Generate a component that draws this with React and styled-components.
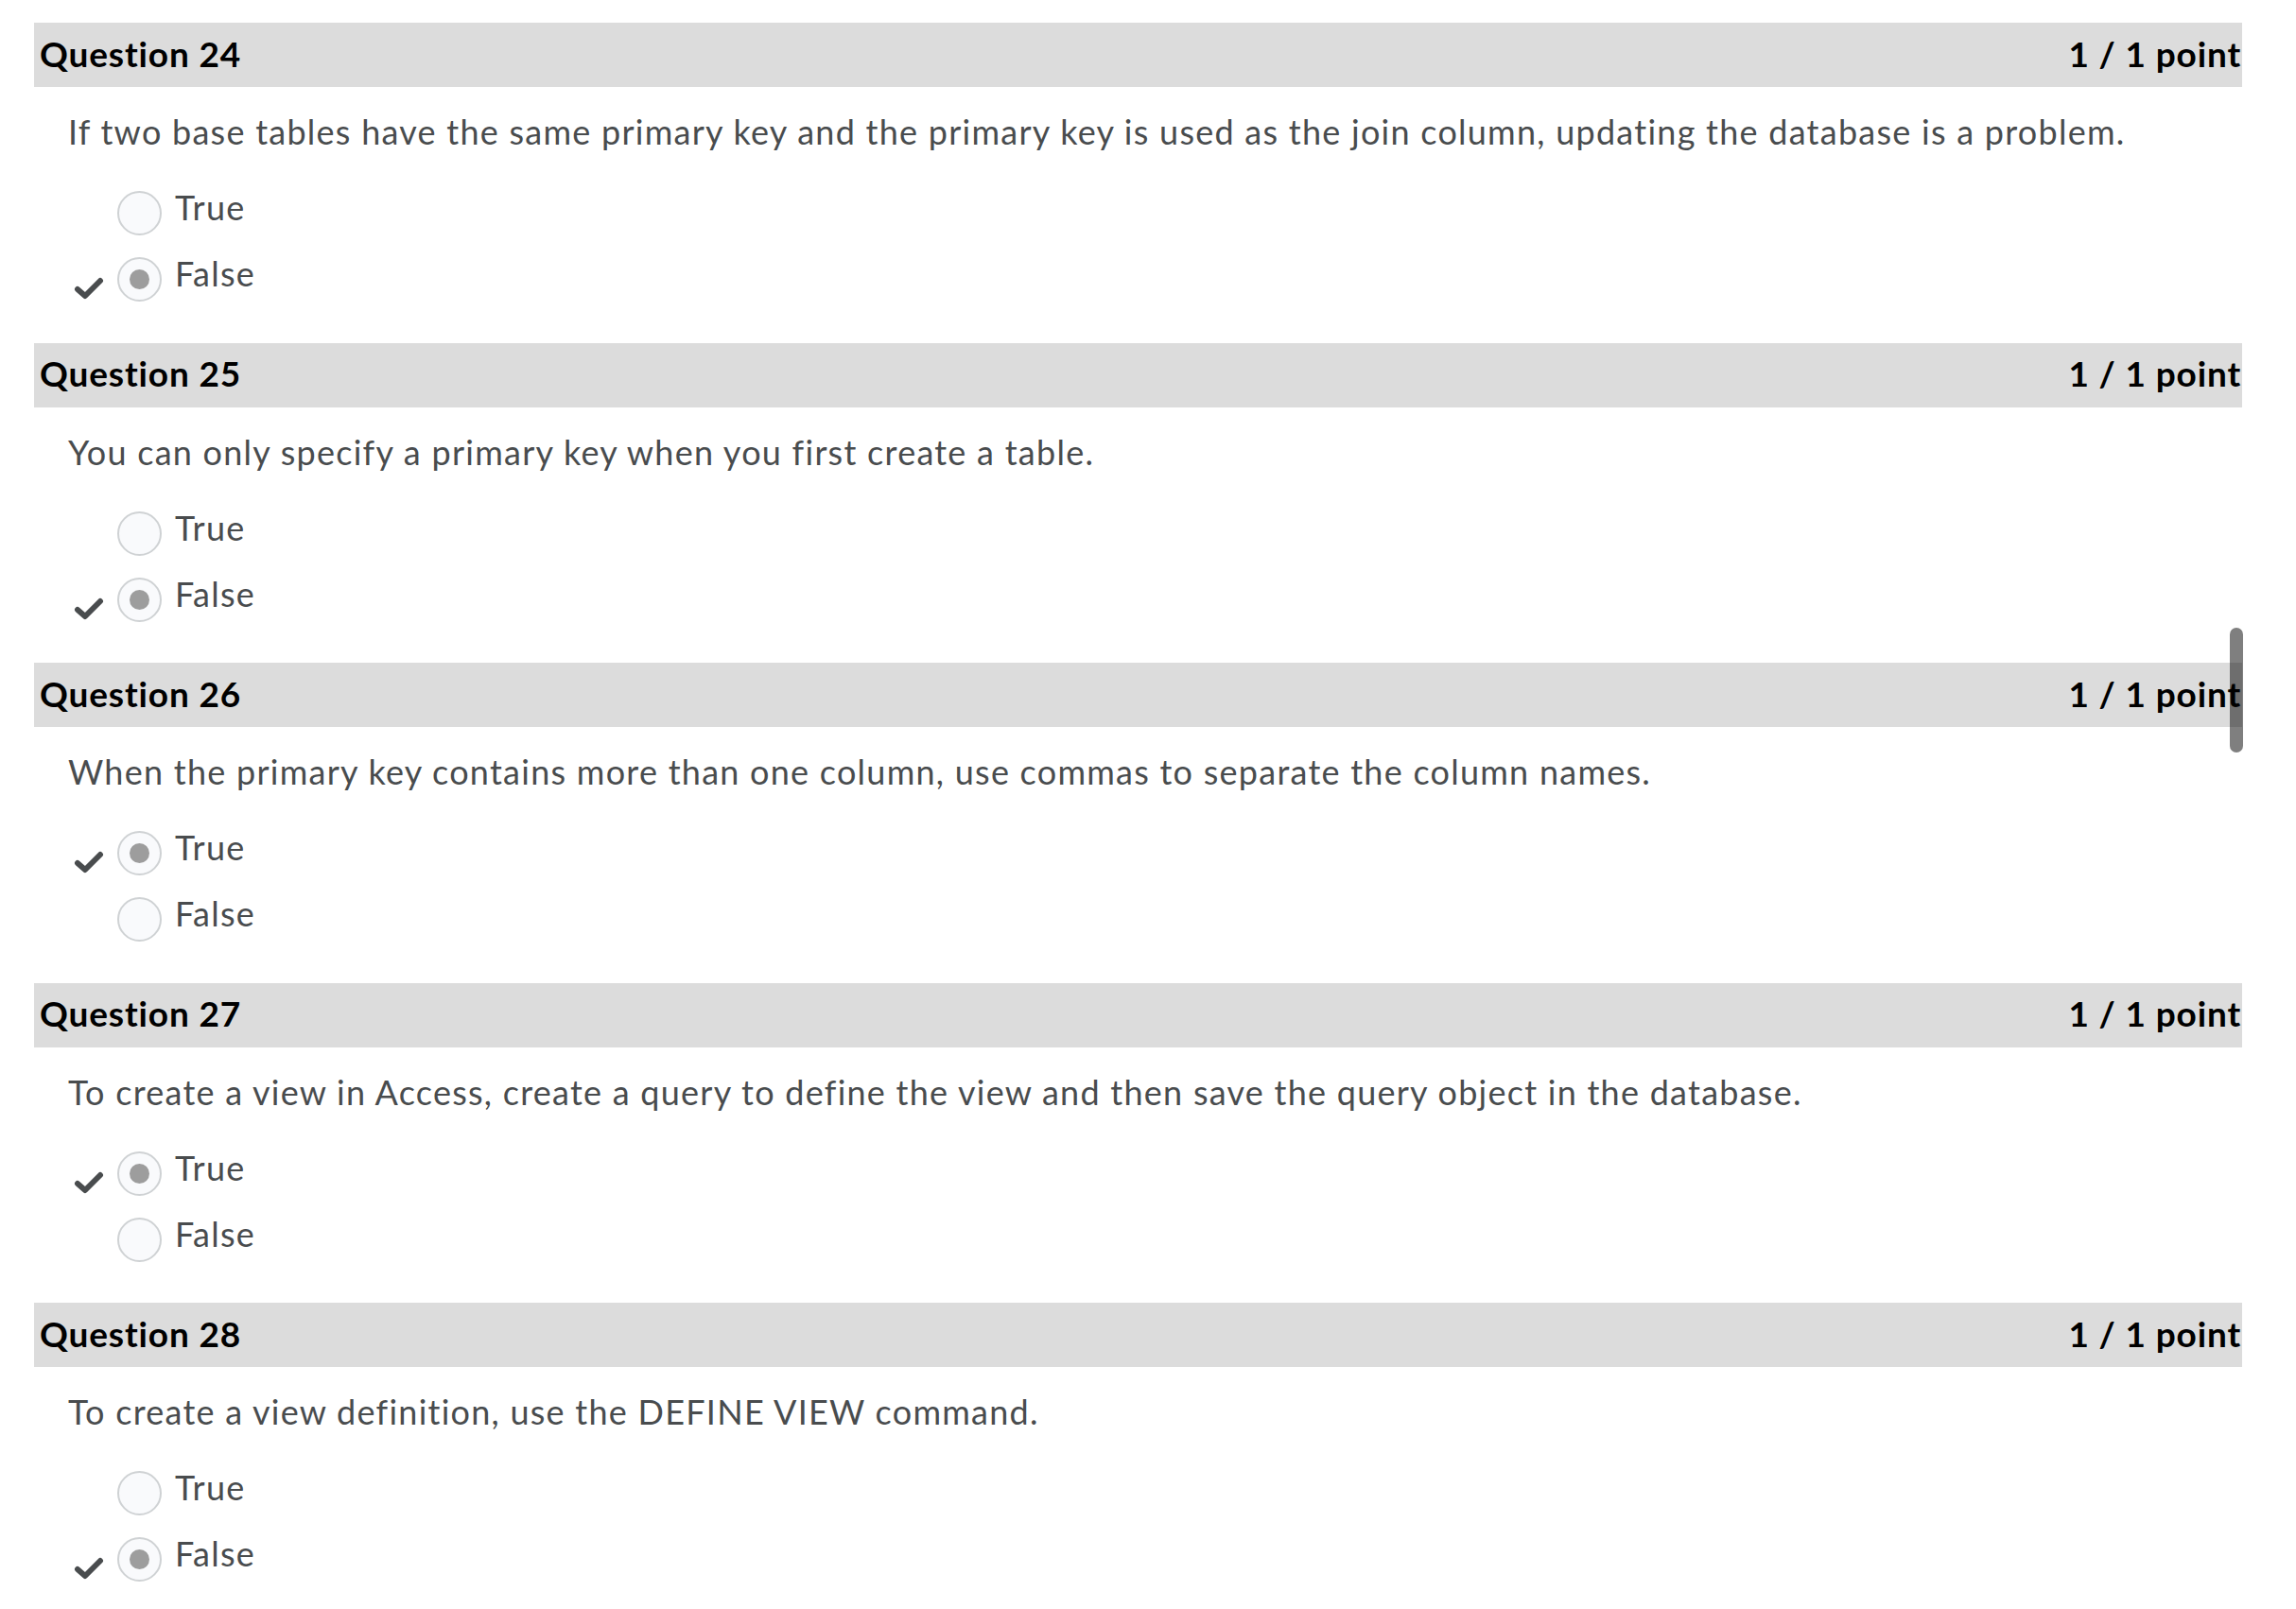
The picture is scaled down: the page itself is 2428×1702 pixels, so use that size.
import React from 'react';
import styled, { createGlobalStyle } from 'styled-components';

const GlobalStyle = createGlobalStyle`
  html, body {
    margin: 0;
    padding: 0;
    background: #ffffff;
  }
  body {
    font-family: Lato, "Open Sans", "Liberation Sans", sans-serif;
    font-variant-ligatures: none;
  }
`;

const Page = styled.div`
  position: relative;
  width: 2335px;
  margin-left: 36px;
  padding-top: 24px;
`;

const Block = styled.section`
  padding-bottom: 26.5px;
`;

const Header = styled.div`
  height: 68px;
  box-sizing: border-box;
  background: #dcdcdc;
  display: flex;
  align-items: center;
  justify-content: space-between;
  padding: 0 1px 4px 6px;
  font-size: 37px;
  font-weight: 700;
  letter-spacing: 0.85px;
  color: #000000;
`;

const Prompt = styled.p`
  margin: 20px 0 30px;
  padding-left: 36px;
  font-size: 36px;
  line-height: 54px;
  letter-spacing: 1.25px;
  color: #494c4e;
`;

const Options = styled.div`
  display: flex;
  flex-direction: column;
  padding-left: 42px;
`;

const Row = styled.div`
  height: 70px;
  display: flex;
  align-items: flex-start;
`;

const Marker = styled.div`
  width: 46px;
  height: 70px;
  flex: none;
  padding-top: 27px;
  box-sizing: border-box;
`;

const Radio = styled.span`
  width: 47px;
  height: 47px;
  flex: none;
  margin-top: 6px;
  box-sizing: border-box;
  border-radius: 50%;
  border: 2px solid #cfd2d4;
  background: #f9fafc;
  display: flex;
  align-items: center;
  justify-content: center;

  &::after {
    content: '';
    width: 21px;
    height: 21px;
    border-radius: 50%;
    background: ${(p) => (p.checked ? '#9d9d9d' : 'transparent')};
  }
`;

const Label = styled.span`
  margin-left: 14px;
  font-size: 36px;
  line-height: 46px;
  letter-spacing: 1.25px;
  color: #494c4e;
`;

const Scrollbar = styled.div`
  position: absolute;
  left: 2322px;
  top: 664px;
  width: 14px;
  height: 132px;
  border-radius: 7px;
  background: rgba(0, 0, 0, 0.5);
`;

const Check = () => (
  <svg width="32" height="24" viewBox="0 0 32 24">
    <polyline
      points="4,13 12,20 28,4"
      fill="none"
      stroke="#494c4e"
      strokeWidth="6"
      strokeLinecap="round"
      strokeLinejoin="round"
    />
  </svg>
);

const questions = [
  {
    n: 24,
    text: 'If two base tables have the same primary key and the primary key is used as the join column, updating the database is a problem.',
    answer: 'False',
  },
  {
    n: 25,
    text: 'You can only specify a primary key when you first create a table.',
    answer: 'False',
  },
  {
    n: 26,
    text: 'When the primary key contains more than one column, use commas to separate the column names.',
    answer: 'True',
  },
  {
    n: 27,
    text: 'To create a view in Access, create a query to define the view and then save the query object in the database.',
    answer: 'True',
  },
  {
    n: 28,
    text: 'To create a view definition, use the DEFINE VIEW command.',
    answer: 'False',
  },
];

const Question = ({ q }) => (
  <Block>
    <Header>
      <span>Question {q.n}</span>
      <span>1 / 1 point</span>
    </Header>
    <Prompt>{q.text}</Prompt>
    <Options>
      {['True', 'False'].map((opt) => (
        <Row key={opt}>
          <Marker>{q.answer === opt && <Check />}</Marker>
          <Radio checked={q.answer === opt} />
          <Label>{opt}</Label>
        </Row>
      ))}
    </Options>
  </Block>
);

export default function App() {
  return (
    <>
      <GlobalStyle />
      <Page>
        {questions.map((q) => (
          <Question key={q.n} q={q} />
        ))}
        <Scrollbar />
      </Page>
    </>
  );
}
